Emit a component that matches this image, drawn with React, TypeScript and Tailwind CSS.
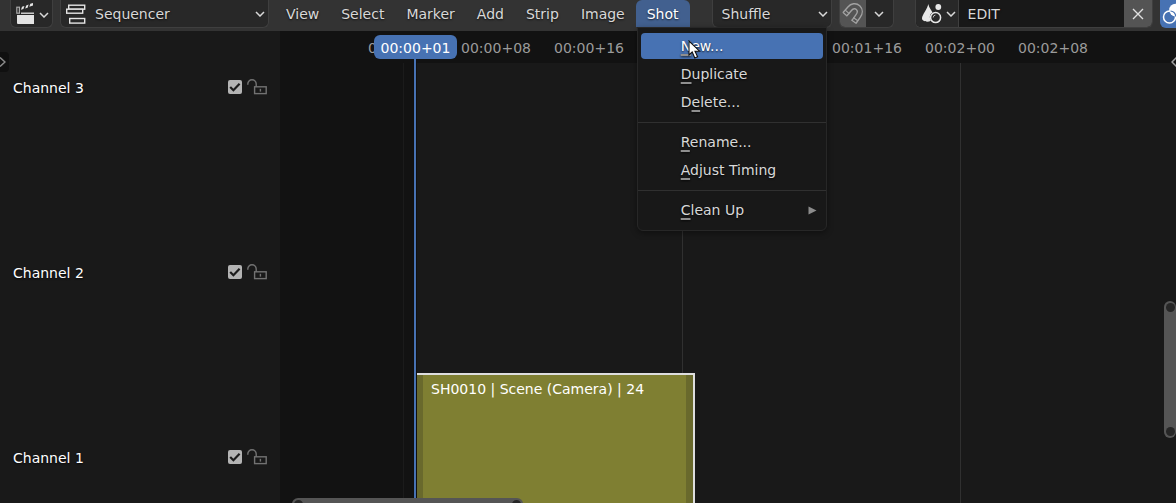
import React from "react";

const textShadow = "[text-shadow:0_1px_2px_rgba(0,0,0,0.7)]";

function Chevron({ className = "" }: { className?: string }) {
  return (
    <svg className={`h-[6px] w-[10px] shrink-0 ${className}`} viewBox="0 0 10 6" fill="none" stroke="#d8d8d8" strokeWidth="1.5" aria-hidden="true">
      <path d="M1 1l4 4 4-4" />
    </svg>
  );
}

function ClapperIcon() {
  return (
    <svg className="h-[22px] w-[19px] shrink-0" viewBox="0 0 19 22" aria-hidden="true">
      <path d="M1 13h17v9H2a1 1 0 0 1-1-1z" fill="#e4e4e4" />
      <path d="M5 11.2h13" stroke="#e4e4e4" strokeWidth="1.3" />
      <rect x=".8" y="5.2" width="2.6" height="6" fill="none" stroke="#a9a9a9" strokeWidth="1.2" />
      <path d="M5 7.8l1-3 2.4-.7-1 3zM9.2 6.4l1-3 2.4-.8-1 3.1zM13.3 4.8l1-3L17 .9v2.7z" fill="#e4e4e4" />
    </svg>
  );
}

function SequencerIcon() {
  return (
    <svg className="h-5 w-5 shrink-0" viewBox="0 0 20 20" fill="none" stroke="#e4e4e4" strokeWidth="1.4" aria-hidden="true">
      <rect x="2.7" y="1.2" width="16" height="4" />
      <rect x=".7" y="5.2" width="16" height="4" fill="#282828" />
      <rect x="3.7" y="14.5" width="15" height="4.6" />
    </svg>
  );
}

function MagnetIcon() {
  const d = "M3 12.2L7.8 6.6C10 4 13.6 3.3 16 5.6s2.2 5.6.2 8.3L12 19.8";
  return (
    <svg className="h-6 w-[22px]" viewBox="0 0 22 24" fill="none" aria-hidden="true">
      <path d={d} stroke="#a2a2a2" strokeWidth="6.4" />
      <path d={d} stroke="#545454" strokeWidth="3.6" />
      <path d="M.8 10.2l4.5 4M9.4 18l5 3.6M3 7.9l4.5 4M11.2 15.4l5 3.6" stroke="#a2a2a2" strokeWidth="1.2" />
    </svg>
  );
}

function SceneIcon() {
  return (
    <svg className="h-5 w-5 shrink-0" viewBox="0 0 20 20" fill="none" aria-hidden="true">
      <path d="M6.3 0C5.6 4.5 0 11 0 14.6c0 2.7 5.5 4.2 8.8 2.2C7 13 8 9.6 10.6 8.6 9 5.8 7 3.6 6.3 0z" fill="#e8e8e8" />
      <circle cx="16.3" cy="3" r="2.9" fill="#e8e8e8" />
      <circle cx="13.6" cy="13.6" r="5" stroke="#e8e8e8" strokeWidth="1.5" />
      <path d="M11.2 13.5a2.5 2.5 0 0 1 2.2-2.4" stroke="#bdbdbd" />
    </svg>
  );
}

function UnlockIcon() {
  return (
    <svg className="h-4 w-5" viewBox="0 0 20 16" fill="none" stroke="#727272" strokeWidth="1.4" aria-hidden="true">
      <path d="M.8 5.8V5a4.2 4.2 0 0 1 8.4 0v3" />
      <rect x="7.6" y="7.8" width="11.6" height="6.8" />
      <path d="M13.4 9.8v2.8" />
    </svg>
  );
}

function Dropdown({ label, value }: { label: string; value: string }) {
  return (
    <select
      aria-label={label}
      defaultValue={value}
      className={`h-full w-full appearance-none bg-transparent pt-[2px] pl-[9px] outline-none ${textShadow}`}
    >
      <option>{value}</option>
    </select>
  );
}

type Entry = { before?: string; key: string; after: string; active?: boolean; submenu?: boolean };

const shotMenu: Entry[][] = [
  [
    { key: "N", after: "ew...", active: true },
    { key: "D", after: "uplicate" },
    { before: "D", key: "e", after: "lete..." },
  ],
  [
    { key: "R", after: "ename..." },
    { key: "A", after: "djust Timing" },
  ],
  [{ key: "C", after: "lean Up", submenu: true }],
];

function ShotMenu() {
  return (
    <div role="menu" aria-label="Shot" className="absolute top-[27px] left-px z-20 w-[190px] rounded-b-md border border-[#272727] bg-[#181818] pt-1 pb-[6px] shadow-[0_2px_6px_rgba(0,0,0,0.4)]">
      {shotMenu.map((group, i) => (
        <div key={i} className={i > 0 ? "mt-[6px] border-t border-[#303030] pt-[5px]" : ""}>
          {group.map((item) => (
            <div key={item.key} className="flex h-7 items-center px-[3px]">
              <button
                role="menuitem"
                className={`flex h-[26px] w-full items-center justify-between rounded pr-[6px] pl-10 text-left ${textShadow} ${item.active ? "bg-[#4772b3] text-white" : "text-[#d8d8d8]"}`}
              >
                <span>
                  {item.before}
                  <span className="underline decoration-[#8f8f8f] decoration-2 underline-offset-3 [text-decoration-skip-ink:none]">{item.key}</span>
                  {item.after}
                </span>
                {item.submenu && (
                  <svg className="h-[9px] w-[9px]" viewBox="0 0 9 9" aria-hidden="true">
                    <path d="M.5.5L8.5 4.5l-8 4z" fill="#8c8c8c" />
                  </svg>
                )}
              </button>
            </div>
          ))}
        </div>
      ))}
      <svg className="absolute top-3 left-[50px] h-5 w-[14px]" viewBox="0 0 14 20" aria-hidden="true">
        <path d="M1 1v14l3.2-3 2.6 6 2.8-1.3L7 11.2h4.6z" fill="#fff" stroke="#111" strokeWidth="1.1" />
      </svg>
    </div>
  );
}

const menus = ["View", "Select", "Marker", "Add", "Strip", "Image"];

function Header() {
  return (
    <header className="flex h-[31px] shrink-0 bg-[#333333] pl-[10px] text-[#d8d8d8]">
      <button aria-label="Editor type" className="flex h-7 w-[43px] shrink-0 items-start gap-1 rounded-b-md border border-t-0 border-[#3f3f3f] bg-[#282828] pt-[2px] pl-[5px]">
        <ClapperIcon />
        <Chevron className="mt-[10px]" />
      </button>
      <div className="ml-[7px] flex h-7 w-[209px] shrink-0 items-center rounded-b-md border border-t-0 border-[#3f3f3f] bg-[#282828] pr-[3px] pl-[5px]">
        <SequencerIcon />
        <Dropdown label="View type" value="Sequencer" />
        <Chevron />
      </div>
      <nav className="ml-[6px] flex h-[27px] shrink-0">
        {menus.map((m) => (
          <button key={m} className={`px-[11px] pt-[2px] ${textShadow}`}>{m}</button>
        ))}
        <div className="relative">
          <button aria-expanded="true" className={`h-full rounded-t-md bg-[#42608f] px-[11px] pt-[2px] text-white ${textShadow}`}>Shot</button>
          <ShotMenu />
        </div>
      </nav>
      <div className="ml-[22px] flex h-7 w-[120px] shrink-0 items-center rounded-b-md border border-t-0 border-[#3f3f3f] bg-[#282828] pr-[3px]">
        <Dropdown label="Overlap mode" value="Shuffle" />
        <Chevron />
      </div>
      <div className="ml-[7px] flex h-7 w-[55px] shrink-0 overflow-hidden rounded-b-md border border-t-0 border-[#3f3f3f] bg-[#282828]">
        <button aria-label="Snap" className="flex w-[26px] items-center justify-center bg-[#545454]"><MagnetIcon /></button>
        <button aria-label="Snapping options" className="flex grow items-center justify-center"><Chevron /></button>
      </div>
      <div className="ml-[21px] flex h-7 min-w-[236px] grow overflow-hidden rounded-b-md border border-t-0 border-[#3f3f3f] bg-[#181818]">
        <button aria-label="Browse scene" className="flex w-[43px] shrink-0 items-center gap-1 border-r border-[#3f3f3f] bg-[#282828] pl-[6px]">
          <SceneIcon />
          <Chevron />
        </button>
        <input aria-label="Scene name" defaultValue="EDIT" className={`min-w-0 grow bg-transparent pt-[2px] pl-[9px] outline-none ${textShadow}`} />
        <button aria-label="Remove scene" className="flex w-7 shrink-0 items-center justify-center bg-[#545454]">
          <svg className="h-[12px] w-[12px]" viewBox="0 0 12 12" stroke="#e0e0e0" strokeWidth="1.4" aria-hidden="true">
            <path d="M1 1l10 10M11 1L1 11" />
          </svg>
        </button>
      </div>
      <button aria-label="Show overlays" className="ml-[7px] h-7 w-4 shrink-0 overflow-hidden rounded-bl-md bg-[#4772b3]">
        <svg className="h-7 w-7" viewBox="0 0 28 28" fill="none" aria-hidden="true">
          <circle cx="15.5" cy="10" r="6.3" fill="#fff" />
          <circle cx="9.5" cy="17" r="6" stroke="#fff" strokeWidth="1.5" />
          <path d="M10.5 11c3 .3 5 2.5 5.2 5.4" stroke="#4772b3" strokeWidth="1.2" />
        </svg>
      </button>
    </header>
  );
}

const channels = ["Channel 3", "Channel 2", "Channel 1"];

function Channels() {
  return (
    <aside className="relative w-[280px] shrink-0 overflow-hidden bg-[#191919] pt-11">
      <button aria-label="Show toolbar" className="absolute top-[21px] left-0 flex h-5 w-[9px] items-center rounded-r bg-[#101010]">
        <svg className="h-[10px] w-[6px]" viewBox="0 0 6 10" fill="none" stroke="#8a8a8a" strokeWidth="1.5" aria-hidden="true"><path d="M0 .5L5 5 0 9.5" /></svg>
      </button>
      <ul>
        {channels.map((name) => (
          <li key={name} className="h-[185px] px-[13px]">
            <div className="flex h-6 items-center">
              <label htmlFor={name} className={`grow pt-[2px] text-white ${textShadow}`}>{name}</label>
              <span className="grid">
                <input id={name} type="checkbox" defaultChecked className="col-start-1 row-start-1 h-[14px] w-[14px] appearance-none rounded-[2px] bg-[#b4b4b4]" />
                <svg className="pointer-events-none col-start-1 row-start-1 h-[14px] w-[14px]" viewBox="0 0 14 14" fill="none" stroke="#1c1c1c" strokeWidth="2.2" aria-hidden="true">
                  <path d="M2.2 7l3.2 3.2 6.2-6.4" />
                </svg>
              </span>
              <button aria-label={`Lock ${name}`} className="ml-[5px]"><UnlockIcon /></button>
            </div>
          </li>
        ))}
      </ul>
    </aside>
  );
}

const ticks = ["00:00+00", "00:00+08", "00:00+16", "00:01+00", "00:01+08", "00:01+16", "00:02+00", "00:02+08"];
const tickX = (i: number) => Math.round(123.4 + i * 92.8);

function Timeline() {
  return (
    <main className="relative grow overflow-hidden bg-[#191919]">
      <div className="absolute inset-y-0 left-0 w-[136px] bg-[#121212]" />
      {[0, 3, 6].map((i) => (
        <div key={i} className={`absolute inset-y-0 w-px ${i === 0 ? "bg-[#1b1b1b]" : "bg-[#303030]"}`} style={{ left: tickX(i) }} />
      ))}
      <div className="relative h-8 bg-[#121212] text-[#9b9b9b]">
        {ticks.map((t, i) => (
          <span key={t} className="absolute top-0 -translate-x-1/2 leading-[34px]" style={{ left: tickX(i) }}>{t}</span>
        ))}
      </div>
      <div className="absolute top-[342px] -bottom-2 left-[136px] w-[279px] border-t-2 border-r-2 border-[#dedede] bg-[#7f7f32]">
        <div className="flex h-full justify-between">
          <div className="w-[7px] bg-[#69692c]" />
          <p className="grow pt-1 pl-2 leading-5 text-white">SH0010 | Scene (Camera) | 24</p>
          <div className="w-[7px] bg-[#69692c]" />
        </div>
      </div>
      <div className="absolute top-7 bottom-0 left-[133px] w-1 border-x border-[#101010] bg-[#4772b3]" />
      <div className="absolute top-1 left-[94px] h-6 w-[83px] rounded-md bg-[#4772b3] text-center leading-[26px] text-white">00:00+01</div>
      <svg className="absolute top-[26px] right-0 h-[10px] w-[5px]" viewBox="0 0 5 10" fill="none" stroke="#a0a0a0" strokeWidth="1.5" aria-hidden="true"><path d="M6 0L1 5l5 5" /></svg>
      <div className="absolute top-[270px] right-0 flex h-[137px] w-3 flex-col items-center justify-between rounded-full bg-[#555555] py-[2px]">
        <span className="h-[9px] w-[9px] rounded-full bg-[#262626]" />
        <span className="h-[9px] w-[9px] rounded-full bg-[#262626]" />
      </div>
      <div className="absolute -bottom-[7px] left-3 flex h-3 w-[231px] items-center justify-between rounded-full bg-[#555555] px-[2px]">
        <span className="h-[9px] w-[9px] rounded-full bg-[#262626]" />
        <span className="h-[9px] w-[9px] rounded-full bg-[#262626]" />
      </div>
    </main>
  );
}

export default function App() {
  return (
    <div className="flex h-screen flex-col overflow-hidden bg-[#191919] font-['DejaVu_Sans',sans-serif] text-[14px]">
      <Header />
      <div className="flex min-h-0 grow">
        <Channels />
        <Timeline />
      </div>
    </div>
  );
}
